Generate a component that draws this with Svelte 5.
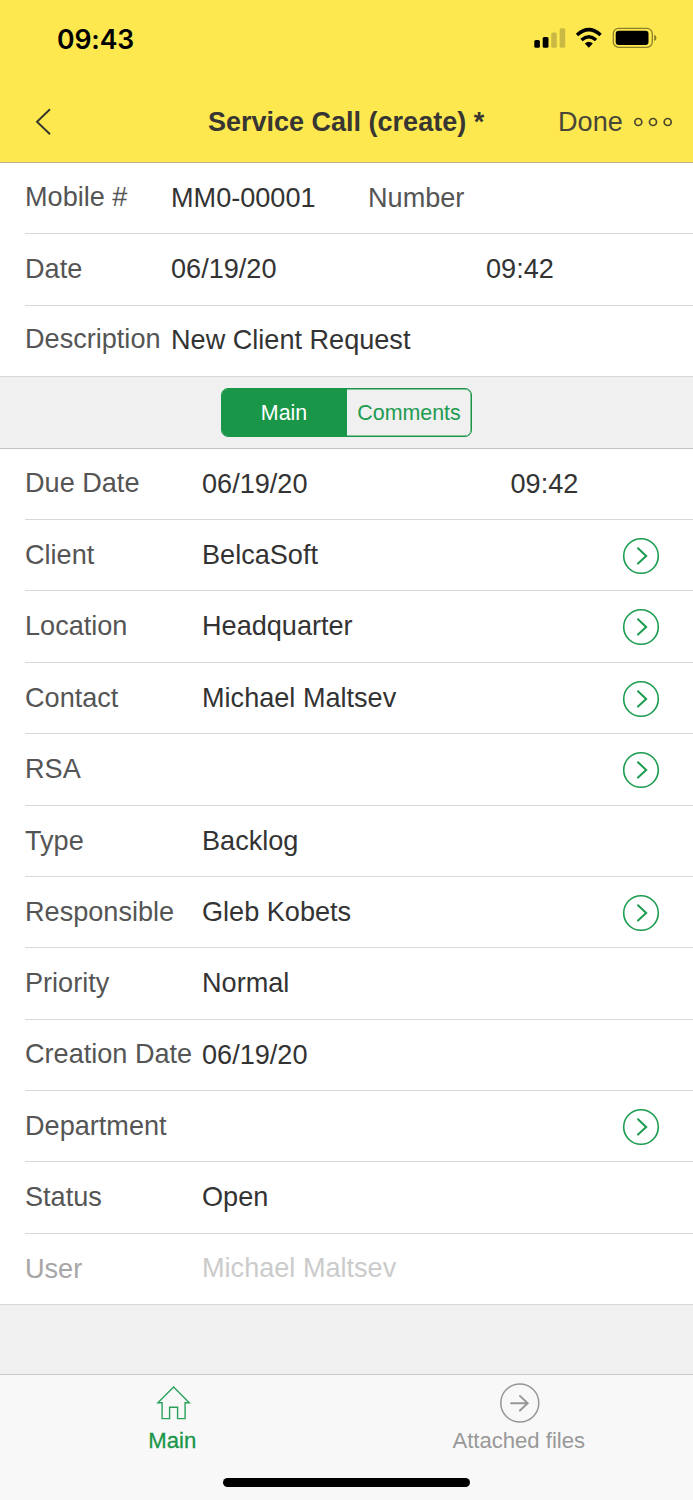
<script>
  const summary = [
    { label: 'Mobile #', value: 'MM0-00001', extra: 'Number', kind: 'caption', up: true },
    { label: 'Date', value: '06/19/20', extra: '09:42', kind: 'time' },
    { label: 'Description', value: 'New Client Request', up: true, raised: true }
  ];
  const details = [
    { label: 'Due Date', value: '06/19/20', extra: '09:42', kind: 'time', up: true },
    { label: 'Client', value: 'BelcaSoft', link: true },
    { label: 'Location', value: 'Headquarter', link: true },
    { label: 'Contact', value: 'Michael Maltsev', link: true },
    { label: 'RSA', value: '', link: true },
    { label: 'Type', value: 'Backlog' },
    { label: 'Responsible', value: 'Gleb Kobets', link: true },
    { label: 'Priority', value: 'Normal' },
    { label: 'Creation Date', value: '06/19/20', up: true },
    { label: 'Department', value: '', link: true },
    { label: 'Status', value: 'Open' },
    { label: 'User', value: 'Michael Maltsev', disabled: true }
  ];
</script>

{#snippet field(row)}
  <div class="row" class:disabled={row.disabled} class:raised={row.raised}>
    <span class="label" class:up={row.up}>{row.label}</span>
    <span class="value">{row.value}</span>
    {#if row.extra}
      <span class="value {row.kind}">{row.extra}</span>
    {/if}
    {#if row.link}
      <svg class="go" width="38" height="38" viewBox="0 0 38 38" fill="none" stroke="#1c9c50">
        <circle cx="19" cy="19" r="17.3" stroke-width="1.6" />
        <path d="M16 11.2 L24.2 18.9 L16 26.6" stroke-width="2" stroke-linecap="round" stroke-linejoin="miter" />
      </svg>
    {/if}
  </div>
{/snippet}

<div class="screen">
  <header>
    <div class="statusbar">
      <span class="clock">09:43</span>
      <svg width="124" height="24" viewBox="533 26 124 24">
        <rect x="534.3" y="40" width="5.6" height="7.8" rx="1.5" />
        <rect x="542.7" y="37" width="5.8" height="10.8" rx="1.5" />
        <g fill="#c9b944">
          <rect x="551.2" y="32.6" width="5.6" height="15.2" rx="1.5" />
          <rect x="559.6" y="28.3" width="5.6" height="19.5" rx="1.5" />
        </g>
        <g fill="none" stroke="#000" stroke-width="3.5">
          <path d="M577 35 Q588.8 24.4 600.6 35" />
          <path d="M581.5 40 Q588.8 33.6 596.1 40" />
        </g>
        <path d="M584.8 43.4 Q588.8 40 592.8 43.4 L588.8 47.8 Z" />
        <rect x="613.3" y="28.3" width="39" height="19" rx="5.4" fill="none" stroke="#8b7f2b" stroke-width="1.3" />
        <rect x="615.7" y="30.7" width="32.8" height="14.3" rx="3" />
        <path d="M654.2 34.7 Q656.5 35.6 656.5 37.9 Q656.5 40.2 654.2 41.1 Z" fill="#8b7f2b" />
      </svg>
    </div>
    <div class="navbar">
      <svg class="back" width="20" height="30" viewBox="33 107 20 30" fill="none" stroke="#36352c" stroke-width="1.9">
        <path d="M50 109.2 L37 121.7 L50 134.2" />
      </svg>
      <h1>Service Call (create) *</h1>
      <div class="actions">
        <span>Done</span>
        <svg width="40" height="12" viewBox="0 0 40 12" fill="none" stroke="#4a472d" stroke-width="1.7">
          <circle cx="5.3" cy="6" r="3.5" /><circle cx="20" cy="6" r="3.5" /><circle cx="34.7" cy="6" r="3.5" />
        </svg>
      </div>
    </div>
  </header>

  <section class="summary">
    {#each summary as row}{@render field(row)}{/each}
  </section>

  <div class="switcher">
    <div class="segments">
      <span class="segment on">Main</span>
      <span class="segment">Comments</span>
    </div>
  </div>

  <section class="details">
    {#each details as row}{@render field(row)}{/each}
  </section>

  <div class="filler"></div>

  <footer>
    <nav>
      <div class="tab active">
        <svg width="42" height="42" viewBox="0 0 42 42" fill="none" stroke="#2aa25b" stroke-width="1.4">
          <path d="M21.6 4.9 L37.3 20.7 H33.1 V36.6 H25.6 V25.3 H17.6 V36.6 H10.1 V20.7 H5.9 Z" />
        </svg>
        <span>Main</span>
      </div>
      <div class="tab">
        <svg width="42" height="42" viewBox="0 0 42 42" fill="none" stroke="#969696">
          <circle cx="20.8" cy="21" r="19" stroke-width="1.5" />
          <path d="M12.1 21.2 H28.6 M20.9 13.9 L28.7 21.2 L20.9 28.5" stroke-width="1.9" stroke-linecap="round" />
        </svg>
        <span>Attached files</span>
      </div>
    </nav>
    <div class="home"></div>
  </footer>
</div>

<style>
  :global(body) { background: #f7f7f7; }
  .screen {
    width: 693px;
    height: 1500px;
    overflow: hidden;
    display: flex;
    flex-direction: column;
    background: #fff;
    font: 27.1px/30px "Liberation Sans", Arial, sans-serif;
    color: #333;
    white-space: nowrap;
  }
  header {
    flex: none;
    box-sizing: border-box;
    height: 163px;
    background: #fde850;
    border-bottom: 1px solid #bcb285;
  }
  .statusbar {
    display: flex;
    justify-content: space-between;
    align-items: center;
    height: 76px;
    padding: 0 36px 0 57px;
    color: #000;
  }
  .clock { padding-top: 2px; font: 600 26.6px/32px Inter, sans-serif; letter-spacing: -0.1px; }
  .navbar {
    display: grid;
    grid-template-columns: 208px 1fr 135px;
    align-items: center;
    height: 92px;
  }
  .back { margin-left: 33px; }
  h1 { margin: 0; font-size: 27px; line-height: 30px; font-weight: bold; color: #373632; }
  .actions { display: flex; align-items: center; gap: 10.5px; color: #484637; }
  section { flex: none; }
  .row {
    box-sizing: border-box;
    display: flex;
    align-items: flex-start;
    height: 71.38px;
    margin-left: 25px;
    padding-top: 20px;
    border-bottom: 1px solid #d8d8d8;
  }
  .row:last-child { margin-left: 0; padding-left: 25px; }
  .raised { padding-top: 19px; }
  .label { flex: none; color: #555; }
  .up { margin-top: -1px; }
  .summary .label { width: 146px; }
  .details .label { width: 177px; }
  .value { flex: none; }
  .summary .value { width: 197px; }
  .summary .value + .time { margin-left: 118px; width: auto; }
  .summary .value + .caption { color: #555; width: auto; }
  .details .value { width: 308.5px; }
  .details .value + .time { width: auto; }
  .go { flex: none; margin: -3px 0 0 111.5px; }
  .disabled .label { color: #a6a6a6; }
  .disabled .value { color: #cbcbcb; margin-top: -1px; }
  .switcher {
    flex: none;
    box-sizing: border-box;
    height: 71.6px;
    display: flex;
    justify-content: center;
    align-items: center;
    background: #f0f0f0;
    border-bottom: 1px solid #c4c4c4;
  }
  .segments {
    box-sizing: border-box;
    display: flex;
    width: 251px;
    height: 49px;
    overflow: hidden;
    border: 1px solid #1a9648;
    box-shadow: inset 0 0 0 0.5px #1a9648;
    border-radius: 7px;
    font-size: 21.4px;
    line-height: 48px;
    text-align: center;
    color: #219b50;
  }
  .segment { flex: 1; }
  .segment.on { box-sizing: border-box; padding-right: 1px; background: #1a9648; color: #fff; }
  .filler { flex: 1; background: #f0f0f0; }
  footer {
    flex: none;
    box-sizing: border-box;
    height: 126px;
    background: #f8f8f8;
    border-top: 1px solid #cbcbcb;
    color: #999;
    font-size: 22.1px;
    line-height: 26px;
  }
  nav { display: flex; height: 103px; }
  .tab {
    flex: 1;
    display: flex;
    flex-direction: column;
    align-items: center;
    padding-top: 7px;
    gap: 4px;
  }
  .tab span { padding-right: 2px; }
  .active { color: #1a9648; }
  .active span { -webkit-text-stroke: 0.3px #1a9648; }
  .home { width: 247px; height: 8.5px; margin: 0 auto; border-radius: 5px; background: #000; }
</style>
